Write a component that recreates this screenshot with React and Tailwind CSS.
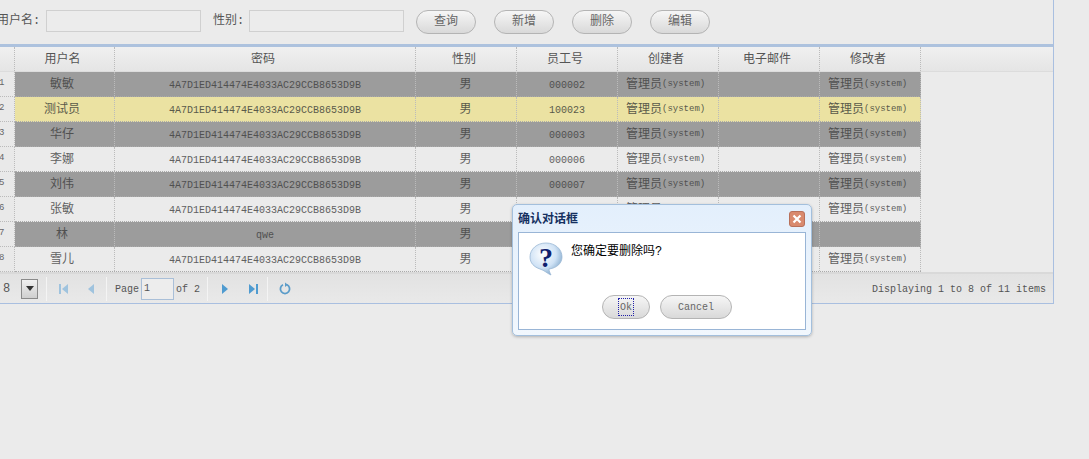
import React from "react";

const font = "font-['Liberation_Mono','Noto_Sans_CJK_SC',monospace]";
const hash = "4A7D1ED414474E4033AC29CCB8653D9B";
const admin = "system";

const columns = ["用户名", "密码", "性别", "员工号", "创建者", "电子邮件", "修改者"];
const widths = ["w-[100px]", "w-[301px]", "w-[101px]", "w-[101px]", "w-[101px]", "w-[101px]", "w-[101px]"];

const rows = [
  { n: 1, name: "敏敏", pass: hash, id: "000002", creator: admin, editor: admin },
  { n: 2, name: "测试员", pass: hash, id: "100023", creator: admin, editor: admin, selected: true },
  { n: 3, name: "华仔", pass: hash, id: "000003", creator: admin, editor: admin },
  { n: 4, name: "李娜", pass: hash, id: "000006", creator: admin, editor: admin },
  { n: 5, name: "刘伟", pass: hash, id: "000007", creator: admin, editor: admin },
  { n: 6, name: "张敏", pass: hash, id: "000008", creator: admin, editor: admin },
  { n: 7, name: "林", pass: "qwe", id: "", creator: "", editor: "" },
  { n: 8, name: "雪儿", pass: hash, id: "", creator: "", editor: admin },
];

const PillButton = ({ children, className = "" }) => (
  <button className={`h-[24px] rounded-full border border-[#b4b4b4] bg-gradient-to-b from-[#f6f6f6] to-[#d9d9d9] text-[#666] ${className}`}>
    {children}
  </button>
);

const Owner = ({ value }) =>
  value ? (
    <span className="flex items-center pl-[8px] text-[12px] whitespace-nowrap">
      管理员<span className="text-[9px]">({value})</span>
    </span>
  ) : null;

const Row = ({ row }) => {
  const gray = !row.selected && row.n % 2 === 1 && row.n !== 8;
  const bg = row.selected ? "bg-[#ebe2a2] text-[#5a5a4a]" : gray ? "bg-[#9c9c9c] text-[#505050]" : "bg-[#ebebeb] text-[#606060]";
  const cell = "h-full flex items-center pt-[2px] border-r border-dotted border-[#bbb]";
  return (
    <div className="flex h-[25px] items-stretch">
      <div className="w-[23px] pl-[7px] flex items-center text-[9px] text-[#666] bg-[#e9e9e9] border-r border-b border-dotted border-[#bbb]">
        {row.n}
      </div>
      <div className={`flex border-b border-dotted border-[#aaa] ${bg}`}>
        <div className={`${cell} ${widths[0]} justify-center pr-[5px] text-[12px]`}>{row.name}</div>
        <div className={`${cell} ${widths[1]} justify-center text-[10px]`}>{row.pass}</div>
        <div className={`${cell} ${widths[2]} justify-center pr-[1px] text-[12px]`}>男</div>
        <div className={`${cell} ${widths[3]} justify-center text-[10px]`}>{row.id}</div>
        <div className={`${cell} ${widths[4]}`}><Owner value={row.creator} /></div>
        <div className={`${cell} ${widths[5]}`}></div>
        <div className={`${cell} ${widths[6]}`}><Owner value={row.editor} /></div>
      </div>
    </div>
  );
};

const Sep = ({ className = "" }) => <div className={`h-[24px] w-px bg-[#c8c8c8] border-r border-[#f4f4f4] ${className}`}></div>;

const PagerIcon = ({ type, color }) => (
  <svg width="12" height="14" viewBox="0 0 12 14" fill={color}>
    {type === "first" && <><rect x="1" y="2" width="2" height="10" /><path d="M10 2v10L4 7z" /></>}
    {type === "prev" && <path d="M9 2v10L3 7z" />}
    {type === "next" && <path d="M3 2v10l6-5z" />}
    {type === "last" && <><path d="M2 2v10l6-5z" /><rect x="9" y="2" width="2" height="10" /></>}
  </svg>
);

const Pager = () => (
  <div className="h-[32px] flex items-center bg-gradient-to-b from-[#e2e2e2] to-[#e9e9e9] border-t-2 border-[#d9d9d9] border-b border-b-[#a9bfe0] text-[10px] text-[#555]">
    <div className="ml-[8px] w-[38px] h-[20px] flex items-center justify-between text-[12px] shrink-0">
      <span className="pl-[3px]">8</span>
      <span className="w-[17px] h-[20px] flex items-center justify-center bg-gradient-to-b from-[#f0f0f0] to-[#cfcfcf] border border-[#8a8a8a]">
        <svg width="8" height="5" viewBox="0 0 8 5" fill="#333"><path d="M0 0h8L4 5z" /></svg>
      </span>
    </div>
    <Sep className="ml-[8px]" />
    <div className="ml-[11px]"><PagerIcon type="first" color="#9fc3de" /></div>
    <div className="ml-[15px]"><PagerIcon type="prev" color="#9fc3de" /></div>
    <Sep className="ml-[9px]" />
    <span className="ml-[8px] pt-[1px]">Page</span>
    <span className="ml-[2px] w-[33px] h-[22px] border border-[#a9bfd8] bg-[#ededed] flex items-center pl-[2px]">1</span>
    <span className="ml-[2px] pt-[1px]">of 2</span>
    <Sep className="ml-[7px]" />
    <div className="ml-[11px]"><PagerIcon type="next" color="#4f9bd0" /></div>
    <div className="ml-[16px]"><PagerIcon type="last" color="#4f9bd0" /></div>
    <Sep className="ml-[8px]" />
    <svg className="ml-[10px]" width="14" height="14" viewBox="0 0 14 14" fill="none">
      <path d="M5 2.8a4.6 4.6 0 1 0 4 0" stroke="#5b9cc9" strokeWidth="1.8" />
      <path d="M7 0.5v4.5l3-2.2z" fill="#5b9cc9" />
    </svg>
    <span className="ml-auto mr-[7px] pt-[1px]">Displaying 1 to 8 of 11 items</span>
  </div>
);

const QuestionIcon = () => (
  <svg width="34" height="34" viewBox="0 0 34 34">
    <defs>
      <radialGradient id="bubble" cx="0.4" cy="0.35" r="0.7">
        <stop offset="0" stopColor="#ffffff" />
        <stop offset="0.6" stopColor="#cfe2f5" />
        <stop offset="1" stopColor="#7fa6c9" />
      </radialGradient>
    </defs>
    <path d="M17 1C8 1 1 7 1 15c0 6 4 10 10 12 4 1 8 5 11 6-1-2-2-4-2-6 8-1 13-6 13-12C33 7 26 1 17 1z" fill="url(#bubble)" stroke="#9ab8d4" strokeWidth="0.8" />
    <text x="17" y="25" textAnchor="middle" fontSize="28" fontWeight="700" fontFamily="Liberation Serif, serif" fill="#10206e">?</text>
  </svg>
);

const Dialog = () => (
  <div className="absolute left-[512px] top-[204px] w-[300px] h-[132px] rounded-[5px] border border-[#a3bfdc] bg-gradient-to-b from-[#e3effc] to-[#f1f7fd] shadow-[0_1px_3px_rgba(0,0,0,0.25)] px-[5px] pb-[5px] flex flex-col">
    <div className="h-[27px] shrink-0 flex items-center justify-between">
      <span className="pt-[2px] text-[12px] font-bold text-[#15305f]">确认对话框</span>
      <span className="w-[16px] h-[16px] mr-[1px] rounded-[3px] bg-[#d98a6e] border border-[#b8705a] flex items-center justify-center">
        <svg width="10" height="10" viewBox="0 0 10 10" stroke="#fff" strokeWidth="2.2"><path d="M1.5 1.5l7 7M8.5 1.5l-7 7" /></svg>
      </span>
    </div>
    <div className="flex-1 bg-white border border-[#99b5d6] flex flex-col">
      <div className="flex pl-[10px] pt-[9px]">
        <QuestionIcon />
        <span className="ml-[8px] mt-[1px] text-[12px] text-black">您确定要删除吗?</span>
      </div>
      <div className="mt-[19px] flex pl-[83px] gap-[10px] text-[10px]">
        <PillButton className="w-[48px] flex items-center justify-center text-[#444]">
          <span className="border border-dotted border-[#2222aa] px-[1px] h-[18px] leading-[17px]">Ok</span>
        </PillButton>
        <PillButton className="w-[72px] pt-[1px] text-[#444]">Cancel</PillButton>
      </div>
    </div>
  </div>
);

export default function App() {
  return (
    <div className={`relative h-[459px] w-[1089px] overflow-hidden bg-[#ebebeb] ${font}`}>
      <div className="ml-[-8px] w-[1062px] border-r border-[#a9bfe0]">
        <div className="h-[44px] flex items-start pt-[10px] text-[12px] text-[#555]">
          <span className="ml-[5px] w-[49px] leading-[22px] whitespace-nowrap">用户名:</span>
          <span className="w-[155px] h-[22px] border border-[#d0d0d0] bg-[#ececec]"></span>
          <span className="ml-[12px] w-[36px] leading-[22px] whitespace-nowrap">性别:</span>
          <span className="w-[155px] h-[22px] border border-[#d0d0d0] bg-[#ececec]"></span>
          <div className="ml-[12px] flex gap-[18px] text-[12px]">
            {["查询", "新增", "删除", "编辑"].map((b) => (
              <PillButton key={b} className="w-[60px]">{b}</PillButton>
            ))}
          </div>
        </div>

        <div className="h-[3px] bg-[#adc2de]"></div>

        <div className="h-[25px] flex bg-gradient-to-b from-[#f0f0f0] to-[#e5e5e5] text-[12px] text-[#555] border-b border-[#dcdcdc]">
          <div className="w-[23px] border-r border-dotted border-[#bbb]"></div>
          {columns.map((c, i) => (
            <div key={c} className={`${widths[i]} flex items-center justify-center pt-[2px] pr-[4px] border-r border-dotted border-[#bbb]`}>{c}</div>
          ))}
        </div>

        {rows.map((r) => <Row key={r.n} row={r} />)}

        <Pager />
      </div>

      <Dialog />
    </div>
  );
}
